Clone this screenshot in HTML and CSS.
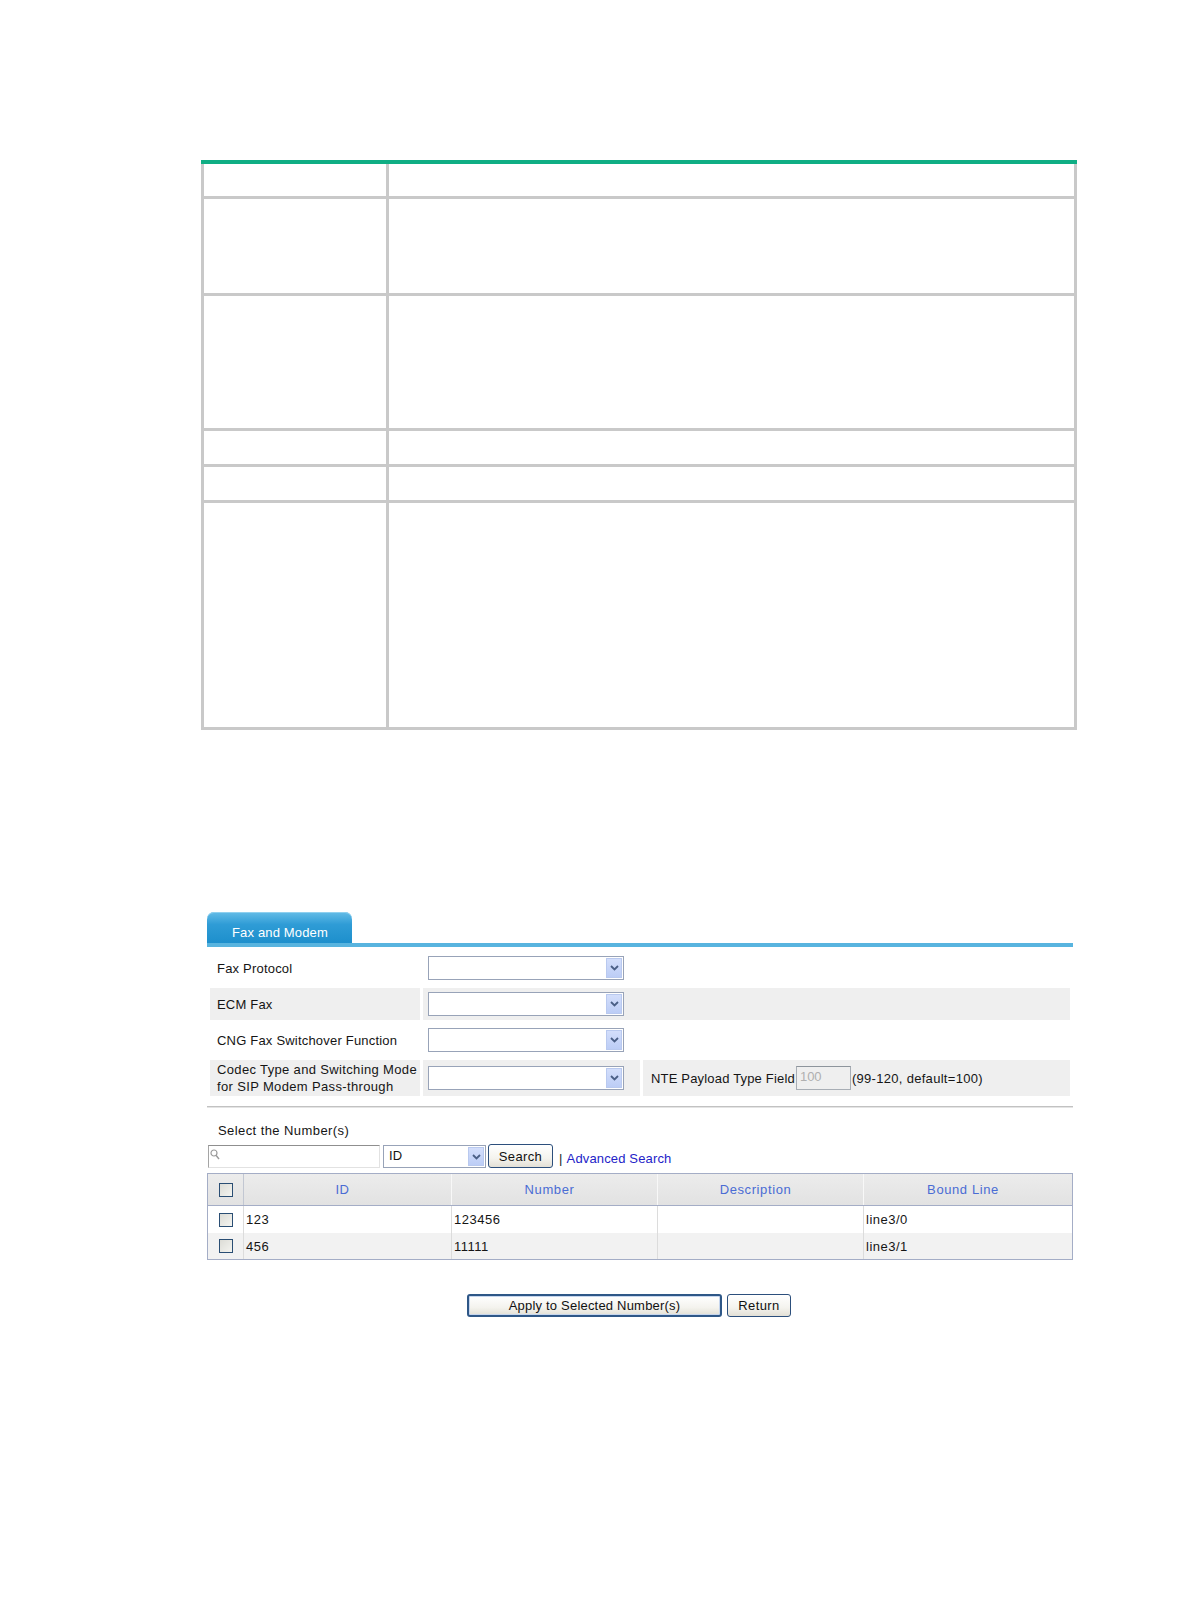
FILE: index.html
```html
<!DOCTYPE html>
<html>
<head>
<meta charset="utf-8">
<title>Fax and Modem</title>
<link rel="stylesheet" href="styles.css">
</head>
<body>
<div class="page">
  <div class="spec">
    <div class="cell"></div><div class="cell"></div>
    <div class="cell"></div><div class="cell"></div>
    <div class="cell"></div><div class="cell"></div>
    <div class="cell"></div><div class="cell"></div>
    <div class="cell"></div><div class="cell"></div>
    <div class="cell"></div><div class="cell"></div>
  </div>

  <div class="panel">
    <div class="tabbar"><div class="tab">Fax and Modem</div></div>

    <div class="form">
      <div class="frow">
        <div class="lbl">Fax Protocol</div>
        <div class="val wide"><div class="select"><span class="arrow"><svg width="9" height="6" viewBox="0 0 9 6"><path d="M1 1 L4.5 4.5 L8 1" fill="none" stroke="#4a5f86" stroke-width="1.8"/></svg></span></div></div>
      </div>
      <div class="frow gray">
        <div class="lbl">ECM Fax</div>
        <div class="val wide"><div class="select"><span class="arrow"><svg width="9" height="6" viewBox="0 0 9 6"><path d="M1 1 L4.5 4.5 L8 1" fill="none" stroke="#4a5f86" stroke-width="1.8"/></svg></span></div></div>
      </div>
      <div class="frow">
        <div class="lbl">CNG Fax Switchover Function</div>
        <div class="val wide"><div class="select"><span class="arrow"><svg width="9" height="6" viewBox="0 0 9 6"><path d="M1 1 L4.5 4.5 L8 1" fill="none" stroke="#4a5f86" stroke-width="1.8"/></svg></span></div></div>
      </div>
      <div class="frow gray tall">
        <div class="lbl two">Codec Type and Switching Mode<br>for SIP Modem Pass-through</div>
        <div class="val"><div class="select"><span class="arrow"><svg width="9" height="6" viewBox="0 0 9 6"><path d="M1 1 L4.5 4.5 L8 1" fill="none" stroke="#4a5f86" stroke-width="1.8"/></svg></span></div></div>
        <div class="val nte">NTE Payload Type Field<span class="numbox">100</span><span class="nte-range">(99-120, default=100)</span></div>
      </div>
    </div>

    <div class="rule"></div>

    <div class="sel-title">Select the Number(s)</div>

    <div class="searchrow">
      <div class="sinput"><svg class="mag" width="10" height="11" viewBox="0 0 10 11"><circle cx="4" cy="4" r="3" fill="none" stroke="#9a9a9a" stroke-width="1.2"/><path d="M6 6.3 L9 10" stroke="#9a9a9a" stroke-width="1.4"/></svg></div>
      <div class="select idsel"><span class="seltext">ID</span><span class="arrow"><svg width="9" height="6" viewBox="0 0 9 6"><path d="M1 1 L4.5 4.5 L8 1" fill="none" stroke="#4a5f86" stroke-width="1.8"/></svg></span></div>
      <div class="btn sbtn">Search</div>
      <span class="sep">|</span>
      <span class="link">Advanced Search</span>
    </div>

    <div class="grid">
      <div class="grow ghead">
        <div class="gc ck"><span class="box"></span></div>
        <div class="gc hc">ID</div>
        <div class="gc hc">Number</div>
        <div class="gc hc">Description</div>
        <div class="gc hc last">Bound Line</div>
      </div>
      <div class="grow r1">
        <div class="gc ck"><span class="box"></span></div>
        <div class="gc">123</div>
        <div class="gc">123456</div>
        <div class="gc"></div>
        <div class="gc last">line3/0</div>
      </div>
      <div class="grow r2">
        <div class="gc ck"><span class="box"></span></div>
        <div class="gc">456</div>
        <div class="gc">11111</div>
        <div class="gc"></div>
        <div class="gc last">line3/1</div>
      </div>
    </div>

    <div class="actions">
      <div class="btn apply">Apply to Selected Number(s)</div>
      <div class="btn ret">Return</div>
    </div>
  </div>
</div>
</body>
</html>
```

FILE: styles.css
```css
html, body {
  margin: 0;
  padding: 0;
  background: #ffffff;
}
body {
  font-family: "Liberation Sans", Arial, sans-serif;
  font-size: 13px;
  color: #151515;
  letter-spacing: 0.2px;
}
.page {
  width: 1190px;
  height: 1616px;
  overflow: hidden;
}

/* top empty spec table */
.spec {
  margin: 160px 0 0 201px;
  width: 876px;
  box-sizing: border-box;
  border-top: 4px solid #0fae84;
  background: #c9c9c9;
  padding: 0 3px 3px 3px;
  display: grid;
  grid-template-columns: 182px 1fr;
  grid-template-rows: 32px 94px 132px 33px 33px 224px;
  gap: 3px;
}
.cell {
  background: #ffffff;
}

/* lower panel */
.panel {
  margin: 182px 0 0 207px;
  width: 866px;
}
.tabbar {
  height: 31px;
  border-bottom: 4px solid #58b4df;
}
.tab {
  width: 145px;
  height: 31px;
  box-sizing: border-box;
  padding: 10px 0 0 25px;
  line-height: 21px;
  color: #ffffff;
  letter-spacing: 0.15px;
  border-radius: 7px 7px 0 0;
  background: linear-gradient(#64bce7, #2f9cd6 40%, #1d8fcc);
  box-shadow: inset 0 1px 0 #8fd0ef;
}

.form {
  margin-top: 5px;
  padding: 0 3px;
  display: flex;
  flex-direction: column;
  gap: 4px;
}
.frow {
  display: grid;
  grid-template-columns: 210px 217px 1fr;
  column-gap: 3px;
  height: 32px;
}
.frow.tall {
  height: 36px;
}
.lbl {
  display: flex;
  align-items: center;
  padding-left: 7px;
  white-space: nowrap;
}
.lbl.two {
  line-height: 17px;
  letter-spacing: 0.35px;
}
.val {
  display: flex;
  align-items: center;
  padding-left: 5px;
}
.val.wide {
  grid-column: span 2;
}
.frow.gray .lbl,
.frow.gray .val {
  background: #efefef;
}

.select {
  position: relative;
  width: 196px;
  height: 24px;
  box-sizing: border-box;
  border: 1px solid #98a3b8;
  background: #ffffff;
}
.arrow {
  position: absolute;
  right: 1px;
  top: 1px;
  bottom: 1px;
  width: 16px;
  box-sizing: border-box;
  border: 1px solid #b9c9ef;
  background: linear-gradient(#d3defb, #bccdf6);
  display: flex;
  align-items: center;
  justify-content: center;
}

.nte {
  padding-left: 8px;
  white-space: nowrap;
  letter-spacing: 0.18px;
}
.numbox {
  display: inline-block;
  width: 55px;
  height: 24px;
  box-sizing: border-box;
  border: 1px solid #a8aeb5;
  border-top-color: #8e959c;
  color: #b0b0b0;
  padding: 2px 0 0 3px;
  line-height: 16px;
  margin: 0 1px 0 1px;
  letter-spacing: 0;
}
.nte-range {
  letter-spacing: 0.3px;
}

.rule {
  margin-top: 10px;
  height: 1px;
  background: #c2c2c2;
  border-bottom: 1px solid #e4e4e4;
}

.sel-title {
  margin-top: 14px;
  padding-left: 11px;
  line-height: 17px;
  letter-spacing: 0.42px;
}

.searchrow {
  margin-top: 5px;
  height: 24px;
  display: flex;
  align-items: flex-end;
}
.sinput {
  position: relative;
  margin-left: 1px;
  width: 172px;
  height: 23px;
  box-sizing: border-box;
  border: 1px solid #e2e2e2;
  border-top-color: #8f8f8f;
  border-left-color: #a5a5a5;
  background: #ffffff;
}
.mag {
  position: absolute;
  left: 1px;
  top: 3px;
}
.idsel {
  margin-left: 3px;
  width: 103px;
  height: 23px;
}
.seltext {
  display: block;
  padding-left: 5px;
  line-height: 20px;
}
.btn {
  box-sizing: border-box;
  border: 1px solid #2c4f7c;
  border-radius: 3px;
  background: linear-gradient(#ffffff, #f4f3ee 60%, #e3e0d6);
  text-align: center;
  color: #111111;
}
.sbtn {
  margin-left: 2px;
  width: 65px;
  height: 24px;
  line-height: 23px;
  letter-spacing: 0.35px;
}
.sep {
  margin-left: 6px;
  line-height: 18px;
  color: #222222;
}
.link {
  margin-left: 4px;
  line-height: 18px;
  color: #2323c8;
  letter-spacing: 0.15px;
}

.grid {
  margin-top: 5px;
  border: 1px solid #a4adc6;
  letter-spacing: 0.5px;
}
.grow {
  display: grid;
  grid-template-columns: 36px 208px 206px 206px 208px;
  height: 27px;
}
.grow.ghead {
  height: 32px;
  box-sizing: border-box;
  border-bottom: 1px solid #a4adc6;
  background: linear-gradient(#ececec, #e2e2e2);
}
.grow.r2 {
  height: 26px;
  background: #f2f2f2;
}
.gc {
  box-sizing: border-box;
  border-right: 1px solid #dcdcdc;
  display: flex;
  align-items: center;
  padding-left: 2px;
  white-space: nowrap;
}
.ghead .gc {
  border-right-color: #f8f8f8;
}
.ghead .gc.ck {
  border-right-color: #c2c7d2;
}
.gc.last {
  border-right: none;
}
.gc.hc {
  justify-content: center;
  padding-left: 0;
  padding-right: 10px;
  color: #4a6cd4;
  letter-spacing: 0.6px;
}
.gc.ck {
  padding-left: 11px;
}
.box {
  display: block;
  width: 14px;
  height: 14px;
  box-sizing: border-box;
  border: 1px solid #2a4e74;
  background: linear-gradient(135deg, #dcdcd6, #f4f4f0);
}

.actions {
  margin-top: 34px;
  padding-left: 260px;
  display: flex;
  gap: 5px;
}
.apply {
  width: 255px;
  height: 23px;
  line-height: 19px;
  border: 2px solid #2e5787;
  box-shadow: inset 0 0 0 1px #c6d6ee;
}
.ret {
  width: 64px;
  height: 23px;
  line-height: 21px;
  letter-spacing: 0.4px;
}
```
